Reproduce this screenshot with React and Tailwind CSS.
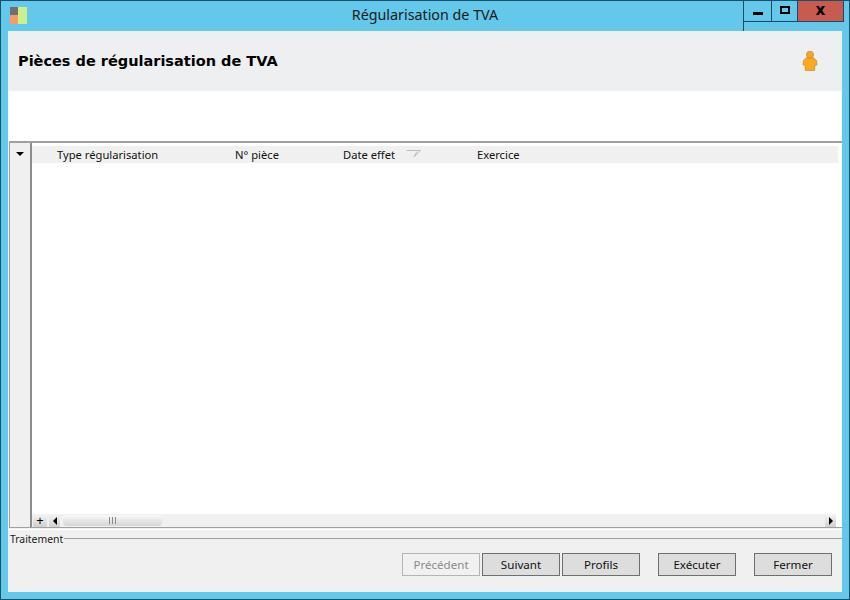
import React from 'react';

const uiFont = "font-['Noto_Sans','Open_Sans',sans-serif]";

function WinButton({ className, children }) {
  return (
    <div className={`h-[21px] flex items-center justify-center border-b border-r border-[#1d4a63] ${className}`}>
      {children}
    </div>
  );
}

function ActionButton({ label, disabled, className = '' }) {
  return (
    <button
      className={`w-[78px] h-[23px] border text-[11.6px] leading-none ${
        disabled
          ? 'border-[#b4b4b4] bg-[#f1f1f1] text-[#8a8a8a]'
          : 'border-[#6e6e6e] bg-[#dddddd] text-[#111111]'
      } ${className}`}
    >
      {label}
    </button>
  );
}

function Person() {
  return (
    <svg width="18" height="22" viewBox="0 0 18 22">
      <circle cx="9" cy="4.8" r="3.6" fill="#f5a623" stroke="#c98a2e" strokeWidth="0.7" />
      <path
        d="M5 8 H13 L15.5 10.5 L16 15 H14 L13.6 20.5 H4.4 L4 15 H2 L2.5 10.5 Z"
        fill="#fba91f"
        stroke="#c98a2e"
        strokeWidth="0.7"
        strokeLinejoin="round"
      />
    </svg>
  );
}

export default function App() {
  return (
    <div className={`w-[850px] h-[600px] flex flex-col border border-[#1c4f6b] bg-[#63c8ea] overflow-hidden ${uiFont}`}>
      {/* Title bar */}
      <div className="h-[30px] shrink-0 grid grid-cols-[1fr_auto_1fr]">
        <div className="pl-[9px] pt-[6px]">
          <div className="w-[17px] h-[17px] grid grid-cols-[8px_9px] grid-rows-[8px_9px]">
            <div className="bg-[#6f6f6f]" />
            <div className="row-span-2 bg-[#c9f08c]" />
            <div className="bg-[#f59a68]" />
          </div>
        </div>
        <div className="pt-[4px] text-[14.3px] leading-[20px] text-[#1a1a1a]">Régularisation de TVA</div>
        <div className="flex justify-end pr-[5px]">
          <div className="flex items-start border-l border-[#1d4a63]">
            <WinButton className="w-[28px]">
              <div className="w-[10px] h-[3px] mt-[5px] bg-black" />
            </WinButton>
            <WinButton className="w-[26px]">
              <div className="w-[10px] h-[8px] mb-[2px] border-2 border-black" />
            </WinButton>
            <WinButton className="w-[46px] bg-[#c75b50]">
              <span className="text-[13px] leading-none font-black text-black mb-[1px]">X</span>
            </WinButton>
          </div>
        </div>
      </div>

      {/* Client area */}
      <div className="flex-1 mx-[7px] mb-[7px] flex flex-col bg-[#f0f0f0] min-h-0">
        <div className="h-[60px] shrink-0 flex items-center justify-between pl-[10px] pr-[23px] bg-[#eeeff0]">
          <h1 className="font-['DejaVu_Sans',sans-serif] text-[14.5px] font-bold text-black pt-[1px]">Pièces de régularisation de TVA</h1>
          <Person />
        </div>
        <div className="h-[50px] shrink-0 bg-white" />

        {/* Grid */}
        <div className="flex-1 min-h-0 ml-[1px] flex border-t-2 border-b border-l border-t-[#a0a0a0] border-b-[#a0a0a0] border-l-[#a0a0a0] bg-white">
          <div className="w-[22px] shrink-0 bg-[#f0f0f0] border-r-2 border-[#8c8c8c] flex justify-center pt-[9px]">
            <div className="w-0 h-0 border-x-[4px] border-x-transparent border-t-[4px] border-t-black" />
          </div>
          <div className="flex-1 flex flex-col pt-[3px] min-w-0">
            <div className="h-[17px] mr-[4px] flex items-center bg-[#f0f0f0] text-[11.2px] text-[#111111]">
              <span className="w-[203px] pl-[25px] shrink-0 pt-[1px]">Type régularisation</span>
              <span className="w-[108px] shrink-0 pt-[1px]">N° pièce</span>
              <span className="w-[63px] shrink-0 pt-[1px]">Date effet</span>
              <svg width="15" height="8" viewBox="0 0 15 8" className="shrink-0 mb-[1px]">
                <path d="M0.5 0.5 H14.5 L8 7 L11 1.5" fill="none" stroke="#bdbdbd" />
              </svg>
              <span className="ml-[56px] pt-[1px]">Exercice</span>
            </div>
            <div className="flex-1" />
            <div className="h-[13px] mr-[6px] flex items-center bg-[#f0f0f0]">
              <div className="w-[14px] h-[13px] ml-[1px] flex items-center justify-center bg-gradient-to-b from-[#f5f5f5] to-[#d0d0d0] text-[13px] leading-none text-black">+</div>
              <div className="w-[11px] h-[13px] ml-[2px] flex items-center justify-center bg-gradient-to-b from-[#f5f5f5] to-[#d0d0d0]">
                <div className="w-0 h-0 border-y-[4px] border-y-transparent border-r-[4px] border-r-black" />
              </div>
              <div className="w-[99px] h-[11px] ml-[3px] flex items-center justify-center rounded-[4px] bg-gradient-to-b from-[#fafafa] to-[#d4d4d4]">
                <div className="w-[7px] h-[7px] border-x border-[#888888] flex justify-center">
                  <div className="w-px h-full bg-[#888888]" />
                </div>
              </div>
              <div className="flex-1" />
              <div className="w-[11px] h-[13px] flex items-center justify-center bg-gradient-to-b from-[#f5f5f5] to-[#d0d0d0]">
                <div className="w-0 h-0 border-y-[4px] border-y-transparent border-l-[4px] border-l-black" />
              </div>
            </div>
          </div>
        </div>

        {/* Traitement */}
        <div className="h-[64px] shrink-0 flex flex-col">
          <div className="h-[19px] flex items-center pl-[2px] mt-[1px] border-t border-white">
            <span className="text-[10.4px] leading-none text-[#1a1a1a] mr-[1px]">Traitement</span>
            <div className="flex-1 h-px bg-[#a0a0a0] mb-[2px]" />
          </div>
          <div className="flex justify-end pr-[10px] pt-[5px]">
            <ActionButton label="Précédent" disabled />
            <ActionButton label="Suivant" className="ml-[2px]" />
            <ActionButton label="Profils" className="ml-[2px]" />
            <ActionButton label="Exécuter" className="ml-[18px]" />
            <ActionButton label="Fermer" className="ml-[18px]" />
          </div>
        </div>
      </div>
    </div>
  );
}
